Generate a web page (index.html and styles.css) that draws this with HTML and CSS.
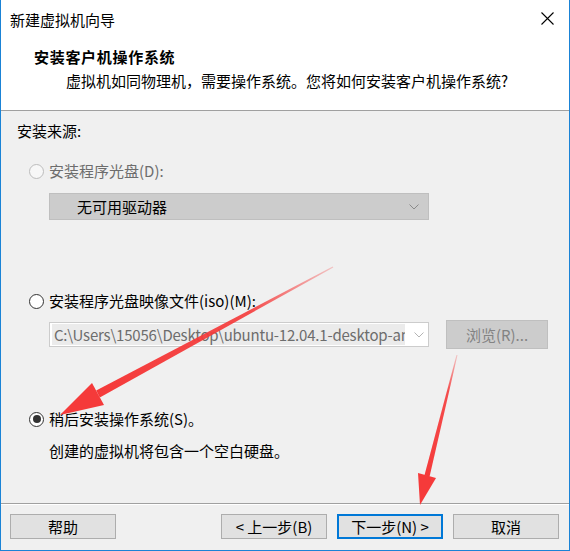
FILE: index.html
```html
<!DOCTYPE html>
<html lang="zh-CN">
<head>
<meta charset="utf-8">
<title>新建虚拟机向导</title>
<link rel="stylesheet" href="styles.css">
</head>
<body>
<div class="window">
  <div class="titlebar">
    <span class="title">新建虚拟机向导</span>
    <svg class="close" width="13" height="13" viewBox="0 0 13 13"><path d="M0.5 0.5 L12.5 12.5 M12.5 0.5 L0.5 12.5" stroke="#000" stroke-width="1.1" fill="none"/></svg>
  </div>
  <div class="header">
    <div class="heading">安装客户机操作系统</div>
    <div class="subtitle">虚拟机如同物理机，需要操作系统。您将如何安装客户机操作系统?</div>
  </div>
  <div class="content">
    <div class="group-label">安装来源:</div>
    <div class="options">
      <div class="radio-row disabled"><span class="radio"></span><span>安装程序光盘(D):</span></div>
      <div class="select">
        <span class="select-text">无可用驱动器</span>
        <svg class="chev" width="10" height="6" viewBox="0 0 10 6"><polyline points="0.5,0.5 5,5 9.5,0.5" fill="none" stroke="#8a8a8a" stroke-width="1"/></svg>
      </div>
      <div class="radio-row second"><span class="radio"></span><span>安装程序光盘映像文件(iso)(M):</span></div>
      <div class="iso-row">
        <div class="combo">
          <span class="combo-text">C:\Users\15056\Desktop\ubuntu-12.04.1-desktop-amd</span>
          <svg class="chev" width="10" height="6" viewBox="0 0 10 6"><polyline points="0.5,0.5 5,5 9.5,0.5" fill="none" stroke="#b4b4b4" stroke-width="1"/></svg>
        </div>
        <div class="browse">浏览(R)...</div>
      </div>
      <div class="radio-row third"><span class="radio checked"></span><span>稍后安装操作系统(S)。</span></div>
      <div class="note">创建的虚拟机将包含一个空白硬盘。</div>
    </div>
  </div>
  <div class="footer">
    <div class="btn">帮助</div>
    <div class="btn back">&lt; 上一步(B)</div>
    <div class="btn primary">下一步(N) &gt;</div>
    <div class="btn">取消</div>
  </div>
  <svg class="arrows" width="570" height="551" viewBox="0 0 570 551">
    <defs>
      <linearGradient id="g1" gradientUnits="userSpaceOnUse" x1="333" y1="267" x2="98" y2="394">
        <stop offset="0" stop-color="#f53a3a" stop-opacity="0.25"/>
        <stop offset="0.35" stop-color="#f53a3a" stop-opacity="0.9"/>
        <stop offset="1" stop-color="#f53a3a"/>
      </linearGradient>
      <linearGradient id="g2" gradientUnits="userSpaceOnUse" x1="457" y1="355" x2="427" y2="476">
        <stop offset="0" stop-color="#f53a3a" stop-opacity="0.25"/>
        <stop offset="0.3" stop-color="#f53a3a" stop-opacity="0.9"/>
        <stop offset="1" stop-color="#f53a3a"/>
      </linearGradient>
    </defs>
    <polygon points="333.3,267.5 332.7,266.5 96.2,390.6 99.8,397.4" fill="url(#g1)"/>
    <polygon points="60,415 104,405 92,383" fill="#f53a3a"/>
    <polygon points="457.5,355.1 456.5,354.9 424.4,475.4 429.6,476.6" fill="url(#g2)"/>
    <polygon points="420,505 436,478 418,473" fill="#f53a3a"/>
  </svg>
</div>
</body>
</html>
```

FILE: styles.css
```css
* { box-sizing: border-box; }

html, body {
  margin: 0;
  padding: 0;
  background: #ffffff;
}

body {
  font-family: "Noto Sans CJK SC", "Noto Sans", sans-serif;
  font-size: 15px;
  color: #000;
}

.window {
  position: relative;
  width: 570px;
  height: 551px;
  border: 1px solid #1a83d6;
  border-top: none;
  display: flex;
  flex-direction: column;
  background: #fff;
}

.titlebar {
  height: 36px;
  display: flex;
  justify-content: space-between;
  align-items: flex-start;
  padding: 0 15px 0 9px;
  background: #fff;
}

.title {
  margin-top: 10px;
  line-height: 19px;
}

.close {
  margin-top: 12px;
}

.header {
  padding: 11px 0 19px;
  background: #fff;
  border-bottom: 1px solid #a0a0a0;
}

.heading {
  padding-left: 33px;
  line-height: 20px;
  font-weight: bold;
  letter-spacing: 0.7px;
}

.subtitle {
  margin-top: 4px;
  padding-left: 65px;
  line-height: 20px;
}

.content {
  flex: 1;
  background: #f0f0f0;
  padding: 10px 0 0 16px;
}

.group-label {
  line-height: 20px;
}

.options {
  margin-left: 12px;
}

.radio-row {
  display: flex;
  align-items: center;
  gap: 5px;
  height: 20px;
  line-height: 20px;
  margin-top: 20px;
}

.radio-row.second { margin-top: 71px; }
.radio-row.third { margin-top: 60px; }

.radio {
  width: 15px;
  height: 15px;
  border-radius: 50%;
  border: 1px solid #333;
  background: #fff;
  display: flex;
  align-items: center;
  justify-content: center;
  flex: none;
}

.radio.checked::after {
  content: "";
  width: 8px;
  height: 8px;
  border-radius: 50%;
  background: #333;
}

.radio-row.disabled { color: #6d6d6d; }
.radio-row.disabled .radio {
  border-color: #bcbcbc;
  background: #f7f7f7;
}

.select {
  margin: 12px 0 0 20px;
  width: 380px;
  height: 27px;
  background: #cccccc;
  border: 1px solid #bfbfbf;
  display: flex;
  align-items: center;
  justify-content: space-between;
  padding: 0 9px 0 27px;
}

.select-text { line-height: 20px; }

.iso-row {
  margin: 9px 0 0 20px;
  display: flex;
  align-items: center;
  gap: 17px;
}

.combo {
  width: 380px;
  height: 25px;
  background: #fff;
  border: 1px solid #cccccc;
  display: flex;
  align-items: center;
  padding: 1px 4px 1px 2px;
  gap: 9px;
}

.combo-text {
  width: 353px;
  height: 100%;
  background: #ebebeb;
  color: #6d6d6d;
  white-space: nowrap;
  overflow: hidden;
  line-height: 21px;
  padding-left: 2px;
  letter-spacing: -0.2px;
}

.browse {
  width: 102px;
  height: 29px;
  background: #cccccc;
  border: 1px solid #bfbfbf;
  color: #838383;
  text-align: center;
  line-height: 27px;
}

.note {
  margin: 12px 0 0 20px;
  line-height: 20px;
}

.footer {
  height: 47px;
  background: #f0f0f0;
  border-top: 1px solid #a0a0a0;
  box-shadow: inset 0 1px 0 #ffffff;
  display: flex;
  align-items: flex-start;
  gap: 10px;
  padding: 10px 10px 0 9px;
}

.btn {
  width: 106px;
  height: 25px;
  background: #e1e1e1;
  border: 1px solid #adadad;
  text-align: center;
  line-height: 23px;
}

.btn.back { margin-left: auto; }

.btn.primary {
  border: 2px solid #0078d7;
  line-height: 21px;
}

.arrows {
  position: absolute;
  left: -1px;
  top: 0;
  pointer-events: none;
}
```
